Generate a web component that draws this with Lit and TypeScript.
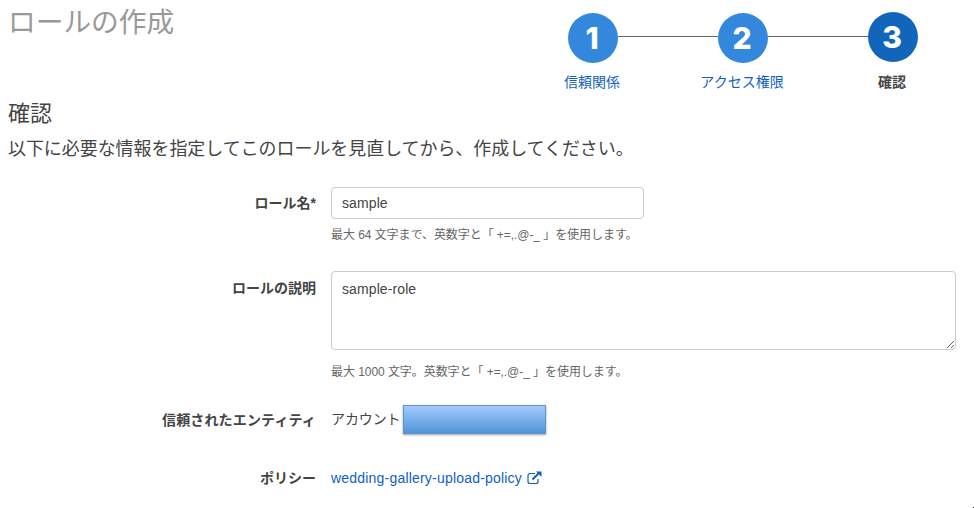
import { LitElement, html, css } from "lit";
import { customElement, property } from "lit/decorators.js";
import { classMap } from "lit/directives/class-map.js";

const STEPS = ["信頼関係", "アクセス権限", "確認"];

@customElement("wizard-steps")
class WizardSteps extends LitElement {
  @property({ type: Number }) current = 3;

  static styles = css`
    :host { display: block; }
    .steps { display: flex; margin: 0; padding: 0; list-style: none; }
    .step { width: 150px; display: flex; flex-direction: column; }
    .track { display: flex; height: 50px; margin-top: 1px; }
    .line { flex: 1; height: 1px; margin-top: 23px; background: #666; }
    .line.off { background: transparent; }
    .dot {
      box-sizing: border-box; width: 50px; height: 50px; padding-right: 2px; border-radius: 50%;
      background: #3388dd; color: #fff; font-family: Inter, "Liberation Sans", sans-serif;
      font-size: 30px; line-height: 50px; font-weight: 800; text-align: center;
    }
    .label {
      margin-top: 9px; padding-right: 2px; text-align: center; font-size: 14px; line-height: 20px;
      color: #1160bf; white-space: nowrap;
    }
    .active .track { margin-top: 0; }
    .active .line { margin-top: 24px; }
    .active .dot { background: #1166bb; }
    .active .label { margin-top: 10px; color: #444; font-weight: 700; }
  `;

  render() {
    return html`<ol class="steps">
      ${STEPS.map((name, i) => html`
        <li class=${classMap({ step: true, active: i + 1 === this.current })}>
          <div class="track">
            <span class=${classMap({ line: true, off: i === 0 })}></span>
            <span class="dot">${i + 1}</span>
            <span class=${classMap({ line: true, off: i === STEPS.length - 1 })}></span>
          </div>
          <div class="label">${name}</div>
        </li>`)}
    </ol>`;
  }
}

@customElement("app-root")
class AppRoot extends LitElement {
  static styles = css`
    :host {
      display: block; position: relative; height: 508px; overflow: hidden; background: #fff; color: #444;
      font-family: "Liberation Sans", "Noto Sans CJK JP", sans-serif; font-size: 14px; line-height: 20px;
    }
    .top { display: flex; justify-content: space-between; height: 98px; padding: 0 6px 0 8px; }
    h1 { margin: 0; padding-top: 3px; font-size: 27.7px; line-height: 40px; font-weight: 400; color: #999; }
    wizard-steps { padding-top: 12px; }
    h2 { margin: 0 8px; font-size: 22px; line-height: 32px; font-weight: 400; }
    .intro { margin: 6px 8px 0; font-size: 17.95px; line-height: 26px; white-space: nowrap; }
    .form { display: grid; grid-template-columns: 316px 1fr; column-gap: 15px; margin-top: 25px; }
    .name, .cell { box-sizing: border-box; }
    .name { text-align: right; font-weight: 700; padding-top: 6px; }
    .cell { padding-right: 18px; }
    .role { height: 84px; }
    .desc { height: 134px; }
    .name.desc { padding-top: 7px; }
    .entity { height: 57px; }
    .name.entity { letter-spacing: 0.15px; padding-top: 5px; }
    input, textarea {
      display: block; box-sizing: border-box; margin: 0; border: 1px solid #ccc; border-radius: 4px;
      font: inherit; letter-spacing: 0.1px; color: #444; background: #fff; outline: none;
    }
    input { width: 313px; height: 32px; padding: 0 10px; }
    textarea { width: 625px; height: 79px; padding: 7px 10px; resize: both; overflow: hidden; }
    .hint { margin-top: 7px; font-size: 12px; line-height: 18px; letter-spacing: -0.06px; color: #666; white-space: nowrap; }
    .desc .hint { margin-top: 13px; }
    .account { display: flex; }
    .account span { padding-top: 4px; letter-spacing: -0.1px; }
    .mask {
      box-sizing: border-box; width: 143px; height: 29px; margin-left: 2.5px; border: 1px solid #5b93cf;
      background: linear-gradient(#a4c9ff, #4f95d8); box-shadow: 0 1px 2px rgba(0, 0, 0, 0.4);
    }
    .link {
      display: flex; align-items: flex-start; padding-top: 6px; letter-spacing: 0.2px;
      color: #1160bf; text-decoration: none;
    }
    .link svg { margin: 3px 0 0 5px; }
    .speck { position: absolute; right: 0; bottom: 0; width: 1px; height: 1px; background: #333; }
  `;

  render() {
    return html`
      <header class="top">
        <h1>ロールの作成</h1>
        <wizard-steps .current=${3}></wizard-steps>
      </header>
      <h2>確認</h2>
      <p class="intro">以下に必要な情報を指定してこのロールを見直してから、作成してください。</p>
      <div class="form">
        <label class="name role">ロール名*</label>
        <div class="cell role">
          <input type="text" .value=${"sample"} />
          <div class="hint">最大 64 文字まで、英数字と「 +=,.@-_ 」を使用します。</div>
        </div>
        <label class="name desc">ロールの説明</label>
        <div class="cell desc">
          <textarea spellcheck="false" .value=${"sample-role"}></textarea>
          <div class="hint">最大 1000 文字。英数字と「 +=,.@-_ 」を使用します。</div>
        </div>
        <div class="name entity">信頼されたエンティティ</div>
        <div class="cell entity account"><span>アカウント</span><i class="mask"></i></div>
        <div class="name">ポリシー</div>
        <div class="cell">
          <a class="link">wedding-gallery-upload-policy
            <svg width="15" height="14" viewBox="0 0 15 14" fill="none" stroke="#1160bf">
              <path d="M8 2.5H3A2 2 0 0 0 1 4.5V10.5A2 2 0 0 0 3 12.5H9A2 2 0 0 0 11 10.5V8" stroke-width="1.2" />
              <path d="M5.5 8.5L12 2" stroke-width="2" />
              <path d="M9 0.5H14.5V6Z" fill="#1160bf" stroke="none" />
            </svg>
          </a>
        </div>
      </div>
      <i class="speck"></i>
    `;
  }
}
